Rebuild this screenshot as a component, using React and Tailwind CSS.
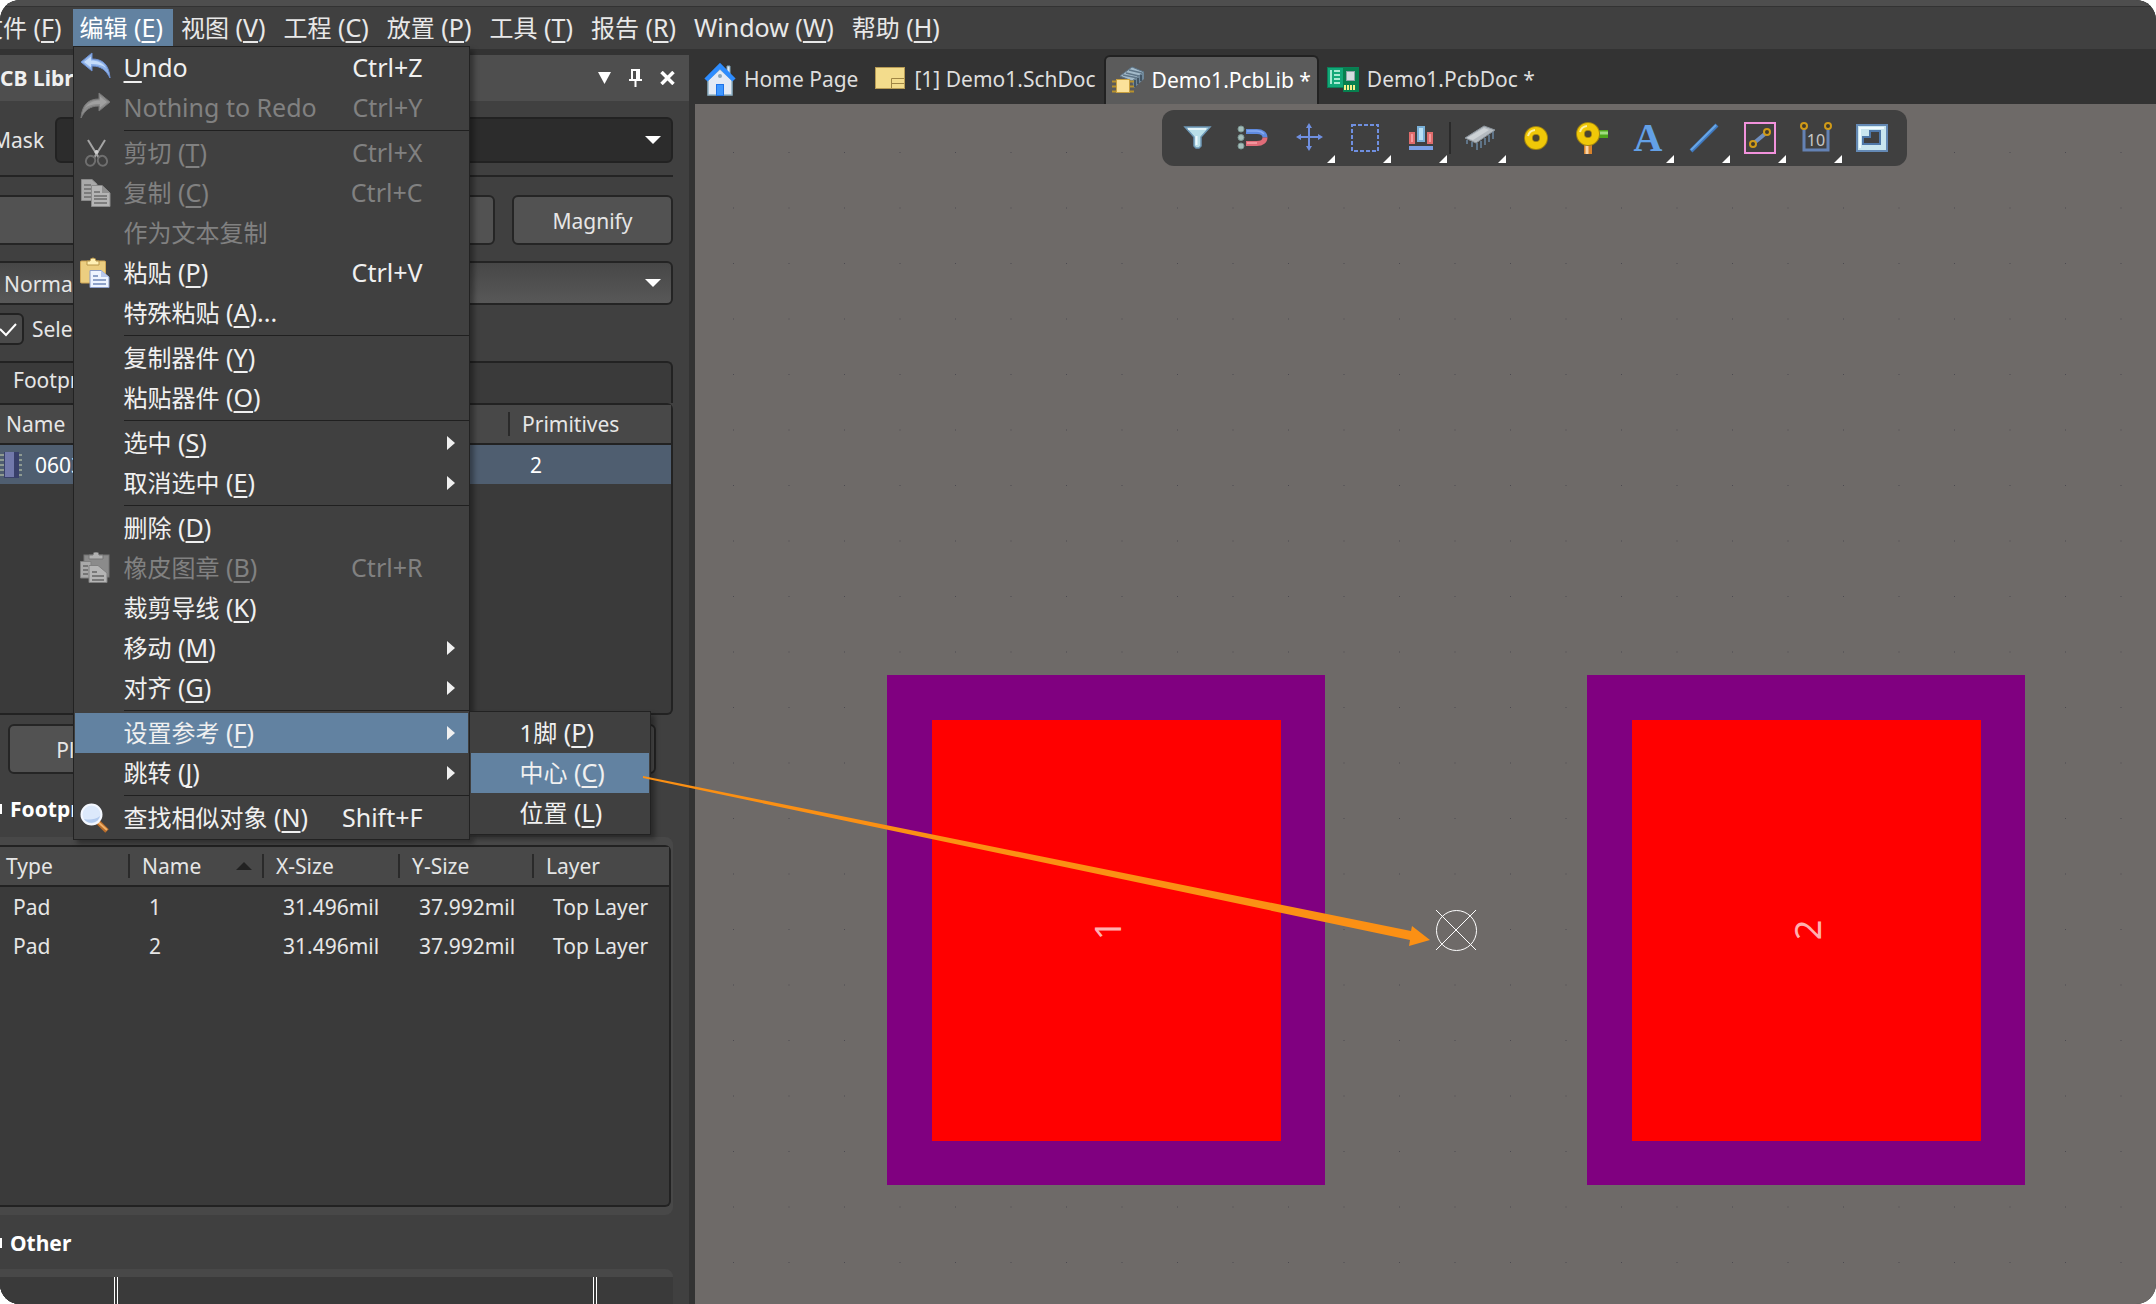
import { Fragment } from 'react'
import clsx from 'clsx'

/* ---------- data ---------- */

const menuBar = [
  { text: '文件', hotkey: 'F' },
  { text: '编辑', hotkey: 'E', open: true },
  { text: '视图', hotkey: 'V' },
  { text: '工程', hotkey: 'C' },
  { text: '放置', hotkey: 'P' },
  { text: '工具', hotkey: 'T' },
  { text: '报告', hotkey: 'R' },
  { text: 'Window', hotkey: 'W' },
  { text: '帮助', hotkey: 'H' },
]

const editMenu = [
  [
    { text: 'Undo', icon: UndoIcon, shortcut: 'Ctrl+Z' },
    { text: 'Nothing to Redo', icon: RedoIcon, shortcut: 'Ctrl+Y', disabled: true },
  ],
  [
    { text: '剪切', hotkey: 'T', icon: CutIcon, shortcut: 'Ctrl+X', disabled: true },
    { text: '复制', hotkey: 'C', icon: CopyIcon, shortcut: 'Ctrl+C', disabled: true },
    { text: '作为文本复制', disabled: true },
    { text: '粘贴', hotkey: 'P', icon: PasteIcon, shortcut: 'Ctrl+V' },
    { text: '特殊粘贴', hotkey: 'A', more: true },
  ],
  [
    { text: '复制器件', hotkey: 'Y' },
    { text: '粘贴器件', hotkey: 'O' },
  ],
  [
    { text: '选中', hotkey: 'S', arrow: true },
    { text: '取消选中', hotkey: 'E', arrow: true },
  ],
  [
    { text: '删除', hotkey: 'D' },
    { text: '橡皮图章', hotkey: 'B', icon: StampIcon, shortcut: 'Ctrl+R', disabled: true },
    { text: '裁剪导线', hotkey: 'K' },
    { text: '移动', hotkey: 'M', arrow: true },
    { text: '对齐', hotkey: 'G', arrow: true },
  ],
  [
    {
      text: '设置参考',
      hotkey: 'F',
      arrow: true,
      active: true,
      submenu: [
        { text: '1脚', hotkey: 'P' },
        { text: '中心', hotkey: 'C', active: true },
        { text: '位置', hotkey: 'L' },
      ],
    },
    { text: '跳转', hotkey: 'J', arrow: true },
  ],
  [{ text: '查找相似对象', hotkey: 'N', icon: FindIcon, shortcut: 'Shift+F' }],
]

const tabs = [
  { name: 'Home Page', icon: HomeIcon },
  { name: '[1] Demo1.SchDoc', icon: SchIcon },
  { name: 'Demo1.PcbLib *', icon: PcbLibIcon, active: true },
  { name: 'Demo1.PcbDoc *', icon: PcbDocIcon },
]

const tools = [
  { name: 'Filter', icon: FilterTool },
  { name: 'Snapping', icon: MagnetTool },
  { name: 'Move', icon: MoveTool, more: true },
  { name: 'Select', icon: SelectTool, more: true },
  { name: 'Align', icon: AlignTool, more: true, divider: true },
  { name: 'Component', icon: ChipTool, more: true },
  { name: 'Pad', icon: PadTool },
  { name: 'Via', icon: ViaTool },
  { name: 'String', icon: TextTool, more: true },
  { name: 'Line', icon: LineTool, more: true },
  { name: 'Room', icon: RoomTool, more: true },
  { name: 'Dimension', icon: DimensionTool, more: true },
  { name: 'Region', icon: RegionTool },
]

const primitives = [
  ['Pad', '1', '31.496mil', '37.992mil', 'Top Layer'],
  ['Pad', '2', '31.496mil', '37.992mil', 'Top Layer'],
]

/* ---------- menu icons ---------- */

function UndoIcon() {
  return (
    <svg width="32" height="32" viewBox="0 0 32 32">
      <path d="M1 10 L12 1 V7 C22 7 29 12 30 26 C26 18 21 14 12 14 V19 Z" fill="#8fb3ea" stroke="#6d8fd0" />
      <path d="M4 10 L11 4.500 V8.500 C18 8.500 23 11 26 16 C22 13 18 12 11 12 V15.500 Z" fill="#c5dcfa" />
    </svg>
  )
}

function RedoIcon() {
  return (
    <svg width="32" height="32" viewBox="0 0 32 32">
      <path d="M30 10 L19 1 V7 C9 7 2 12 1 26 C5 18 10 14 19 14 V19 Z" fill="#8c8c8c" stroke="#777" />
      <path d="M27 10 L20 4.500 V8.500 C13 8.500 8 11 5 16 C9 13 13 12 20 12 V15.500 Z" fill="#a0a0a0" />
    </svg>
  )
}

function CutIcon() {
  return (
    <svg width="32" height="32" viewBox="0 0 32 32" fill="none">
      <path d="M8 3 L19 21" stroke="#a5a5a5" strokeWidth="2" />
      <path d="M25 3 L14 21" stroke="#a5a5a5" strokeWidth="2" />
      <ellipse cx="10.500" cy="24" rx="4.500" ry="5" stroke="#6f6f6f" strokeWidth="2" transform="rotate(25 11 24)" />
      <ellipse cx="22.500" cy="24" rx="4.500" ry="5" stroke="#6f6f6f" strokeWidth="2" transform="rotate(-25 22 24)" />
      <circle cx="16.500" cy="15" r="2" fill="#d0d0d0" />
    </svg>
  )
}

function CopyIcon() {
  return (
    <svg width="32" height="32" viewBox="0 0 32 32">
      <path d="M1.500 2.500 H12 L17 7 V23.500 H1.500 Z" fill="#a9a9a9" stroke="#8a8a8a" />
      <path d="M4 8 H11 M4 12 H12 M4 16 H12 M4 20 H12" stroke="#6c6c6c" strokeWidth="1.500" />
      <path d="M11.500 8.500 H22 L30 16 V29.500 H11.500 Z" fill="#b5b5b5" stroke="#8a8a8a" />
      <path d="M22 8.500 V16 H30 Z" fill="#909090" />
      <path d="M14 15 H20 M14 19 H27 M14 22 H27 M14 26 H27" stroke="#6c6c6c" strokeWidth="1.500" />
    </svg>
  )
}

function PasteIcon() {
  return (
    <svg width="32" height="32" viewBox="0 0 32 32">
      <rect x="0.500" y="4" width="25" height="22" rx="1" fill="#ecce80" stroke="#cfa656" />
      <path d="M7 4 H10 A3 3 0 0 1 16 4 H19 V8 H7 Z" fill="#fff0b4" stroke="#b8964a" />
      <path d="M10 13.500 H21 L29 20 V30.500 H10 Z" fill="#eef4ff" stroke="#8a9cc8" />
      <path d="M21 13.500 V20 H29 Z" fill="#b8c8ec" />
      <path d="M13 19 H18 M13 23 H26 M13 27 H26" stroke="#6f86b8" strokeWidth="1.500" />
    </svg>
  )
}

function StampIcon() {
  return (
    <svg width="32" height="32" viewBox="0 0 32 32">
      <rect x="4" y="3" width="25" height="22" fill="#8b8b8b" stroke="#757575" />
      <path d="M9 3 H13 A3 3 0 0 1 19 3 H23 V7 H9 Z" fill="#b0b0b0" stroke="#777" />
      <path d="M0.500 9.500 H11 V26 H0.500 Z" fill="#a9a9a9" stroke="#808080" />
      <path d="M3 14 H8 M3 18 H8 M3 22 H8" stroke="#666" strokeWidth="1.500" />
      <path d="M9 13.500 H18 L27 21 V30.500 H9 Z" fill="#b5b5b5" stroke="#808080" />
      <path d="M12 20 H17 M12 24 H24 M12 28 H24" stroke="#666" strokeWidth="1.500" />
    </svg>
  )
}

function FindIcon() {
  return (
    <svg width="32" height="32" viewBox="0 0 32 32">
      <path d="M18 20 L27 29" stroke="#b86c2a" strokeWidth="5" />
      <path d="M18 20 L27 28" stroke="#f0b068" strokeWidth="2" />
      <circle cx="11.500" cy="12.500" r="10" fill="#dce9fb" stroke="#f4f8ff" strokeWidth="2" />
      <path d="M4 17 A9 9 0 0 0 20 14 C15 18 9 18 4 17 Z" fill="#b3cbee" />
    </svg>
  )
}

/* ---------- document icons ---------- */

function HomeIcon() {
  return (
    <svg width="32" height="34" viewBox="0 0 32 34">
      <path d="M23 3 H26 V14 H23 Z" fill="#dfe8f4" stroke="#7fa3b8" />
      <path d="M4 17 L16 6 L28 17 V32 H4 Z" fill="#e4eaf5" stroke="#8fb2c6" strokeWidth="1.500" />
      <path d="M2 17 L16 3 L30 17" fill="none" stroke="#2d8cff" strokeWidth="4.500" />
      <circle cx="16" cy="13" r="2" fill="#8ba6b8" />
      <rect x="12.500" y="21.500" width="7" height="11" fill="#3f97ff" stroke="#1f72e8" />
    </svg>
  )
}

function SchIcon() {
  return (
    <svg width="32" height="34" viewBox="0 0 32 34">
      <rect x="1.500" y="4.500" width="29" height="21" fill="#f3dc8c" stroke="#b89c55" />
      <path d="M30 15.500 H17.500 V25 M17.500 20.500 H30" fill="none" stroke="#a08645" />
    </svg>
  )
}

function PcbLibIcon() {
  return (
    <svg width="32" height="34" viewBox="0 0 32 34">
      <path d="M8 12 L20 3 L32 8 L20 17 Z" fill="#a3bac9" stroke="#5c7487" />
      <path d="M11 11 L26 14 M14 9 L27 12 M17 6 L30 9" stroke="#5f7688" strokeWidth="1.500" />
      <path d="M20 17 L32 8 V15 L22 24 Z" fill="#6f8799" />
      <path d="M23 16 V23 M26 14 V20 M29 11 V17" stroke="#344654" strokeWidth="1.500" />
      <path d="M0 17.500 H22 M0 22.500 H22 M0 27.500 H22" stroke="#b8922c" strokeWidth="2" />
      <rect x="4.500" y="15.500" width="13" height="13" fill="#fbe29a" stroke="#c8a040" />
    </svg>
  )
}

function PcbDocIcon() {
  return (
    <svg width="32" height="34" viewBox="0 0 32 34">
      <rect x="0.500" y="4.500" width="31" height="20" fill="#12a878" stroke="#0a7f58" />
      <path d="M4 7 V21 M7 8 H13 M7 12 H13 M7 16 H13 M7 20 H13" stroke="#d9fff0" strokeWidth="1.500" fill="none" />
      <rect x="16" y="5" width="16" height="24" fill="#07804f" />
      <rect x="19.500" y="8.500" width="8" height="9" fill="#d4dde0" stroke="#8fa3a8" />
      <path d="M18 22 V27 M21 22 V27 M24 22 V27 M27 22 V27" stroke="#f4f08a" strokeWidth="2" />
    </svg>
  )
}

/* ---------- toolbar icons ---------- */

function ToolSvg({ children }) {
  return (
    <svg width="32" height="32" viewBox="0 0 32 32" fill="none">
      {children}
    </svg>
  )
}

function FilterTool() {
  return (
    <ToolSvg>
      <path d="M4 5 H29 L20 15 V24 L18 26 H15 L13 24 V15 Z" fill="#b9dfe8" stroke="#6d97b5" strokeWidth="1.500" />
      <path d="M7 7 H25" stroke="#f2fbff" strokeWidth="1.500" />
      <path d="M15.500 14 V23" stroke="#eefaff" strokeWidth="2" />
    </ToolSvg>
  )
}

function MagnetTool() {
  return (
    <ToolSvg>
      <g fill="#a4bdb9" stroke="#7b9793">
        <circle cx="4" cy="7" r="3" />
        <circle cx="4" cy="15.500" r="3" />
        <circle cx="4" cy="24" r="3" />
      </g>
      <path d="M9 9.500 H20 C25 9.500 28 12 28 15.500" stroke="#5f8ade" strokeWidth="5" />
      <path d="M9 21.500 H20 C25 21.500 28 19 28 15.500" stroke="#e06c78" strokeWidth="5" />
      <path d="M10 9 H20 C23 9 25 10 27 12" stroke="#86aaf0" strokeWidth="1.500" />
      <path d="M10 21 H20" stroke="#f7a3aa" strokeWidth="1.500" />
    </ToolSvg>
  )
}

function MoveTool() {
  return (
    <ToolSvg>
      <path d="M16 4 V26 M5 15 H28" stroke="#6f8fe0" strokeWidth="2" />
      <path d="M16 1 L19 6 H13 Z M16 29 L19 24 H13 Z M3 15 L8 12 V18 Z M30 15 L25 12 V18 Z" fill="#6f8fe0" />
    </ToolSvg>
  )
}

function SelectTool() {
  return (
    <ToolSvg>
      <rect x="3" y="3" width="26" height="26" stroke="#6f8fe0" strokeWidth="2" strokeDasharray="4 2" />
    </ToolSvg>
  )
}

function AlignTool() {
  return (
    <ToolSvg>
      <rect x="5" y="11" width="4" height="10" fill="#f59a9e" stroke="#e06c6c" strokeWidth="2" />
      <rect x="13" y="5" width="6" height="14" fill="#b9e0f5" stroke="#79b0d8" strokeWidth="2" />
      <rect x="23" y="11" width="4" height="10" fill="#f59a9e" stroke="#e06c6c" strokeWidth="2" />
      <rect x="4" y="24" width="24" height="4" fill="#7b9fe4" />
    </ToolSvg>
  )
}

function ChipTool() {
  return (
    <ToolSvg>
      <path d="M3 18 V22 M8 20 V25 M13 21 V28 M17 19 V26 M21 16 V23 M25 13 V20 M29 9 V17" stroke="#5f7488" strokeWidth="2" />
      <path d="M1 16 L20 4 L31 8 L12 21 Z" fill="#b4bac0" stroke="#8b949c" />
      <path d="M3 16 L20 6 L25 8 L9 18 Z" fill="#cdd2d6" />
    </ToolSvg>
  )
}

function PadTool() {
  return (
    <ToolSvg>
      <circle cx="16" cy="16" r="7.500" stroke="#a08310" strokeWidth="9" />
      <circle cx="16" cy="16" r="7.500" stroke="#f0c808" strokeWidth="7" />
      <path d="M8 14 A8 8 0 0 1 15 8" stroke="#fdf0a0" strokeWidth="2" />
      <circle cx="16" cy="16" r="3" fill="#4a4530" />
    </ToolSvg>
  )
}

function ViaTool() {
  return (
    <ToolSvg>
      <path d="M20 12 H32" stroke="#4ea51c" strokeWidth="8" />
      <path d="M20 11 H32" stroke="#a0dc80" strokeWidth="3" />
      <path d="M12 22 V32" stroke="#d8822a" strokeWidth="8" />
      <path d="M11 22 V32" stroke="#f8d4a8" strokeWidth="3" />
      <circle cx="12" cy="12" r="7.500" stroke="#a08310" strokeWidth="9" />
      <circle cx="12" cy="12" r="7.500" stroke="#f0c808" strokeWidth="7" />
      <path d="M4 10 A8 8 0 0 1 11 4" stroke="#fdf0a0" strokeWidth="2" />
      <circle cx="12" cy="12" r="3" fill="#4a4530" />
    </ToolSvg>
  )
}

function TextTool() {
  return <span className="font-['Liberation_Serif',serif] text-[40px] leading-8 font-bold text-[#63a0e6]">A</span>
}

function LineTool() {
  return (
    <ToolSvg>
      <path d="M3 29 L29 3" stroke="#3f79c0" strokeWidth="4" />
      <path d="M3 28 L28 3" stroke="#68a6e6" strokeWidth="2" />
    </ToolSvg>
  )
}

function RoomTool() {
  return (
    <ToolSvg>
      <rect x="1" y="1" width="30" height="30" stroke="#f292dc" strokeWidth="2" />
      <path d="M10 21 L22 11" stroke="#6f8fc0" strokeWidth="4" />
      <circle cx="9" cy="22" r="3" fill="#403a2a" stroke="#d09a18" strokeWidth="2" />
      <circle cx="23" cy="10" r="3" fill="#403a2a" stroke="#d09a18" strokeWidth="2" />
    </ToolSvg>
  )
}

function DimensionTool() {
  return (
    <ToolSvg>
      <path d="M4 7 V28 H28 V7" stroke="#6482b4" strokeWidth="3" />
      <circle cx="4" cy="4" r="3" fill="#403a2a" stroke="#d09a18" strokeWidth="2" />
      <circle cx="28" cy="4" r="3" fill="#403a2a" stroke="#d09a18" strokeWidth="2" />
      <text x="16" y="24" textAnchor="middle" fontSize="16" fontFamily="Noto Sans, sans-serif" fill="#c8c8c8">
        10
      </text>
    </ToolSvg>
  )
}

function RegionTool() {
  return (
    <ToolSvg>
      <rect x="1" y="3" width="30" height="26" fill="#c9e6ef" stroke="#6489b4" strokeWidth="2" />
      <path d="M4 26 V6 H28" stroke="#eefaff" strokeWidth="2" />
      <path d="M14 9 H24 V22 H7 V15 H14 Z" fill="#404040" stroke="#4f78a8" strokeWidth="2" />
    </ToolSvg>
  )
}

/* ---------- menus ---------- */

function MenuLabel({ text, hotkey, more }) {
  const latin = /^[A-Z][a-z]/.test(text)
  return (
    <span className="whitespace-pre">
      {text === 'Undo' ? (
        <span className="text-[25px]">
          <u className="underline-offset-4">U</u>ndo
        </span>
      ) : (
        <span className={latin ? 'text-[25px]' : 'text-[24px]'}>{text}</span>
      )}
      {hotkey && (
        <span className="text-[25px]">
          {' ('}
          <u className="underline-offset-4">{hotkey}</u>
          {more ? ')...' : ')'}
        </span>
      )}
    </span>
  )
}

function MenuItem({ item }) {
  const Icon = item.icon
  return (
    <li className="relative px-px">
      <button
        disabled={item.disabled}
        className={clsx(
          'flex h-10 w-full items-center pr-[13px] text-left',
          item.disabled ? 'text-[#818181]' : 'text-[#f0f0f0]',
          item.active && 'bg-[#6282a1]'
        )}
      >
        <span className="w-[49px] shrink-0 pl-[5px]">{Icon && <Icon />}</span>
        <span className="flex-1">
          <MenuLabel {...item} />
        </span>
        {item.shortcut && <span className="pr-8 text-[25px]">{item.shortcut}</span>}
        {item.arrow && (
          <svg width="8" height="14" viewBox="0 0 8 14" fill="#f0f0f0">
            <path d="M0 0 L8 7 L0 14 Z" />
          </svg>
        )}
      </button>
      {item.submenu && (
        <ul className="absolute -top-[2px] left-full w-[182px] border border-[#222] bg-[#404040] p-px shadow-[4px_4px_5px_rgba(0,0,0,0.35)]">
          {item.submenu.map((sub) => (
            <li key={sub.text}>
              <button
                className={clsx('flex h-10 w-full items-center pl-[49px] text-[#f0f0f0]', sub.active && 'bg-[#6282a1]')}
              >
                <MenuLabel {...sub} />
              </button>
            </li>
          ))}
        </ul>
      )}
    </li>
  )
}

function EditMenu() {
  return (
    <ul className="absolute top-full left-0 z-20 w-[397px] border border-[#222] bg-[#404040] py-px shadow-[4px_4px_5px_rgba(0,0,0,0.35)]">
      {editMenu.map((group, i) => (
        <Fragment key={i}>
          {i > 0 && <li role="separator" className="my-[2px] ml-[50px] h-px bg-[#202020]" />}
          {group.map((item) => (
            <MenuItem key={item.text} item={item} />
          ))}
        </Fragment>
      ))}
    </ul>
  )
}

function MenuBar() {
  return (
    <header className="border-t-[6px] border-[#4e4e4e] bg-[#404040]">
      <nav className="-ml-7 flex h-[43px] gap-px border-t border-[#333] pt-[2px] text-[#e8e8e8]">
        {menuBar.map((item) => (
          <div key={item.text} className="relative h-[37px]">
            <button
              className={clsx('flex h-[37px] items-center pr-[10px] pl-[7px]', item.open && 'bg-[#6282a1] text-white')}
            >
              <MenuLabel {...item} />
            </button>
            {item.open && <EditMenu />}
          </div>
        ))}
      </nav>
    </header>
  )
}

/* ---------- library panel ---------- */

function Caret() {
  return (
    <svg className="pointer-events-none absolute top-1/2 right-3 -translate-y-1/2" width="16" height="8" viewBox="0 0 16 8">
      <path d="M0 0 H16 L8 8 Z" fill="#fff" />
    </svg>
  )
}

function PanelButton({ className, label, children }) {
  return (
    <button
      aria-label={label}
      className={clsx('h-[50px] rounded-md border-2 border-[#252525] bg-[#525252] pt-[2px]', className)}
    >
      {children}
    </button>
  )
}

function HeadCell({ children, first }) {
  return (
    <th className="p-0 font-normal">
      <div className={clsx('flex h-6 items-center', first ? 'pl-[6px]' : 'border-l-2 border-[#2a2a2a] pl-3')}>
        {children}
      </div>
    </th>
  )
}

function FootprintList() {
  return (
    <div className="h-[312px] rounded-r-md border-2 border-l-0 border-[#222] bg-[#3a3a3a]">
      <table className="w-full table-fixed border-collapse text-left">
        <colgroup>
          <col className="w-[508px]" />
          <col />
        </colgroup>
        <thead>
          <tr className="h-[39px] border-b-2 border-[#222] bg-[#484848]">
            <HeadCell first>Name</HeadCell>
            <HeadCell>Primitives</HeadCell>
          </tr>
        </thead>
        <tbody>
          <tr className="h-10 bg-[#4f5e70] text-white">
            <td className="p-0">
              <div className="flex items-center gap-[13px]">
                <svg width="22" height="26" viewBox="0 0 22 26">
                  <path d="M0 3 H22 M0 8 H22 M0 13 H22 M0 18 H22 M0 23 H22" stroke="#8e9a92" strokeWidth="2" />
                  <rect x="4" width="15" height="26" fill="#39406a" />
                  <rect x="5" width="9" height="25" fill="#7279ab" />
                </svg>
                0603
              </div>
            </td>
            <td className="p-0 pl-[22px]">2</td>
          </tr>
        </tbody>
      </table>
    </div>
  )
}

function PrimitivesTable() {
  return (
    <div className="h-[362px] rounded-r-md border-2 border-l-0 border-[#222] bg-[#3a3a3a]">
      <table className="w-full table-fixed border-collapse text-left">
        <colgroup>
          <col className="w-[128px]" />
          <col className="w-[134px]" />
          <col className="w-[136px]" />
          <col className="w-[134px]" />
          <col />
        </colgroup>
        <thead>
          <tr className="h-[39px] border-b-2 border-[#222] bg-[#484848]">
            <HeadCell first>Type</HeadCell>
            <HeadCell>
              <span className="flex-1">Name</span>
              <svg className="mr-[10px]" width="16" height="8" viewBox="0 0 16 8">
                <path d="M0 8 H16 L8 0 Z" fill="#222" />
              </svg>
            </HeadCell>
            <HeadCell>X-Size</HeadCell>
            <HeadCell>Y-Size</HeadCell>
            <HeadCell>Layer</HeadCell>
          </tr>
        </thead>
        <tbody>
          {primitives.map((row) => (
            <tr key={row[1]} className="h-10">
              {row.map((cell, i) => (
                <td key={i} className={clsx('p-0', i === 0 ? 'pl-[13px]' : 'pl-[21px]')}>
                  {cell}
                </td>
              ))}
            </tr>
          ))}
        </tbody>
      </table>
    </div>
  )
}

function SectionTitle({ children }) {
  return (
    <h2 className="flex items-center gap-2 font-bold text-white">
      <span className="h-[10px] w-[2px] bg-white" />
      {children}
    </h2>
  )
}

function LibraryPanel() {
  return (
    <aside className="flex w-[695px] shrink-0 flex-col bg-[#333] pr-[6px] text-[21px] leading-6 text-[#e6e6e6]">
      <div className="flex h-[46px] items-center bg-[#4e4e4e] pr-[14px]">
        <h1 className="-ml-[13px] flex-1 font-bold text-[#f0f0f0]">PCB Library</h1>
        <div className="flex items-center gap-[18px]">
          <button aria-label="Panel menu">
            <svg width="13" height="12" viewBox="0 0 13 12" fill="#fff">
              <path d="M0 0 H13 L6.500 12 Z" />
            </svg>
          </button>
          <button aria-label="Pin">
            <svg width="13" height="18" viewBox="0 0 13 18" fill="#fff">
              <path d="M2 0 H11 V10 H13 V12 H7.500 V18 H5.500 V12 H0 V10 H2 Z M4 2 V10 H7 V2 Z" fillRule="evenodd" />
            </svg>
          </button>
          <button aria-label="Close">
            <svg width="15" height="14" viewBox="0 0 15 14">
              <path d="M1.500 1 L13.500 13 M13.500 1 L1.500 13" stroke="#fff" strokeWidth="3.500" />
            </svg>
          </button>
        </div>
      </div>

      <div className="flex flex-1 flex-col bg-[#404040] pr-4">
        <div className="mt-4 flex items-center gap-[11px]">
          <label htmlFor="mask" className="-ml-2">
            Mask
          </label>
          <div className="relative flex-1">
            <select id="mask" className="block h-[46px] w-full appearance-none rounded-md border-2 border-[#222] bg-[#2c2c2c]" />
            <Caret />
          </div>
        </div>
        <hr className="mt-3 border-t-2 border-[#242424]" />

        <div className="-ml-2 mt-[18px] flex gap-[17px]">
          <PanelButton className="flex-1" label="Clear" />
          <PanelButton className="w-[161px]">Magnify</PanelButton>
        </div>

        <div className="relative mt-4 -ml-2">
          <select
            aria-label="View mode"
            className="block h-[44px] w-full appearance-none rounded-md border-2 border-[#242424] bg-linear-to-b from-[#474747] to-[#585858] pt-[2px] pl-[10px]"
          >
            <option>Normal</option>
          </select>
          <Caret />
        </div>

        <label className="mt-2 -ml-2 flex items-center gap-2">
          <span className="relative flex h-8 w-8">
            <input
              type="checkbox"
              defaultChecked
              className="h-8 w-8 appearance-none rounded-md border-2 border-[#222] bg-[#4a4a4a]"
            />
            <svg className="pointer-events-none absolute inset-0" width="32" height="32" viewBox="0 0 32 32" fill="none">
              <path d="M8 16 L14 22 L24 11" stroke="#fff" strokeWidth="2" />
            </svg>
          </span>
          Select
        </label>

        <div className="mt-4 flex h-[42px] items-center rounded-tr-md border-2 border-b-0 border-l-0 border-[#222] bg-[#3a3a3a] pb-[6px] pl-[13px]">
          Footprints
        </div>
        <FootprintList />

        <div className="mt-[9px] mr-[17px] ml-2 flex gap-[18px]">
          <PanelButton className="flex-1">Place</PanelButton>
          <PanelButton className="flex-1" label="Add" />
          <PanelButton className="flex-1" label="Delete" />
          <PanelButton className="flex-1" label="Edit" />
        </div>

        <div className="mt-[23px]">
          <SectionTitle>Footprint Primitives</SectionTitle>
        </div>
        <div className="mt-4 rounded-r-lg bg-[#484848] py-2 pr-[2px]">
          <PrimitivesTable />
        </div>

        <div className="mt-4">
          <SectionTitle>Other</SectionTitle>
        </div>
        <div className="mt-[14px] flex flex-1 flex-col rounded-tr-lg bg-[#484848] pt-2">
          <div className="flex min-h-6 flex-1 bg-[#3a3a3a] pl-[114px]">
            <div className="w-1 border-x border-white" />
            <div className="w-[475px]" />
            <div className="w-1 border-x border-white" />
          </div>
        </div>
      </div>
    </aside>
  )
}

/* ---------- editor ---------- */

function TabBar() {
  return (
    <div className="flex h-[49px] bg-[#333] pl-px text-[21px]">
      {tabs.map(({ name, icon: Icon, active }) => (
        <button
          key={name}
          className={clsx(
            'flex items-center gap-2',
            active ? 'rounded-t-md border-2 border-b-0 border-[#222] bg-[#5b5b5b] px-[6px] text-white' : 'px-2 text-[#dedede]'
          )}
        >
          <Icon />
          {name}
        </button>
      ))}
    </div>
  )
}

function Toolbar() {
  return (
    <div className="absolute top-[6px] left-[467px] flex h-14 items-center rounded-xl bg-[#404040] px-[7px]">
      {tools.map(({ name, icon: Icon, more, divider }) => (
        <Fragment key={name}>
          <button aria-label={name} className="relative flex h-14 w-14 items-center justify-center">
            <Icon />
            {more && (
              <svg className="absolute right-[2px] bottom-[3px]" width="8" height="8" viewBox="0 0 8 8">
                <path d="M8 0 V8 H0 Z" fill="#fff" />
              </svg>
            )}
          </button>
          {divider && <span className="mr-px h-8 w-[2px] bg-[#2a2a2a]" />}
        </Fragment>
      ))}
    </div>
  )
}

function Pad({ x, y, name }) {
  return (
    <g transform={`translate(${x} ${y})`}>
      <rect width="438" height="510" fill="#800080" />
      <rect x="45" y="45" width="349" height="421" fill="#ff0000" />
      <text
        transform="translate(234 255) rotate(-90)"
        textAnchor="middle"
        fontSize="36"
        fontFamily="Noto Sans, sans-serif"
        fill="#ffb0b0"
      >
        {name}
      </text>
    </g>
  )
}

function Canvas() {
  return (
    <div className="relative flex-1 overflow-hidden bg-[#6e6a68]">
      <svg className="absolute inset-0 h-full w-full">
        <defs>
          <pattern id="grid" x="38" y="48" width="55.500" height="55.500" patternUnits="userSpaceOnUse">
            <rect width="1" height="1" fill="#4c4a50" />
          </pattern>
        </defs>
        <rect width="100%" height="100%" fill="url(#grid)" />
        <Pad x={192} y={571} name="1" />
        <Pad x={892} y={571} name="2" />
        <g fill="none" stroke="#fff" strokeWidth="1">
          <circle cx="761.500" cy="826.500" r="20" />
          <path d="M741 806 L781 846 M781 806 L741 846" />
        </g>
      </svg>
      <Toolbar />
    </div>
  )
}

function PointerArrow() {
  return (
    <svg className="pointer-events-none absolute top-[770px] left-[640px] z-30" width="800" height="190" viewBox="0 0 800 190">
      <path d="M3 6 L771 161 L772 156 L790 170 L769 176 L770 170 L3 8 Z" fill="#fb9014" />
    </svg>
  )
}

export default function App() {
  return (
    <div className="min-h-screen bg-white font-['Noto_Sans','Noto_Sans_CJK_SC',sans-serif]">
      <div className="relative flex min-h-screen flex-col overflow-hidden rounded-[20px] bg-[#333]">
        <MenuBar />
        <div className="mt-[6px] flex flex-1">
          <LibraryPanel />
          <main className="flex min-w-0 flex-1 flex-col">
            <TabBar />
            <Canvas />
          </main>
        </div>
        <PointerArrow />
      </div>
    </div>
  )
}
